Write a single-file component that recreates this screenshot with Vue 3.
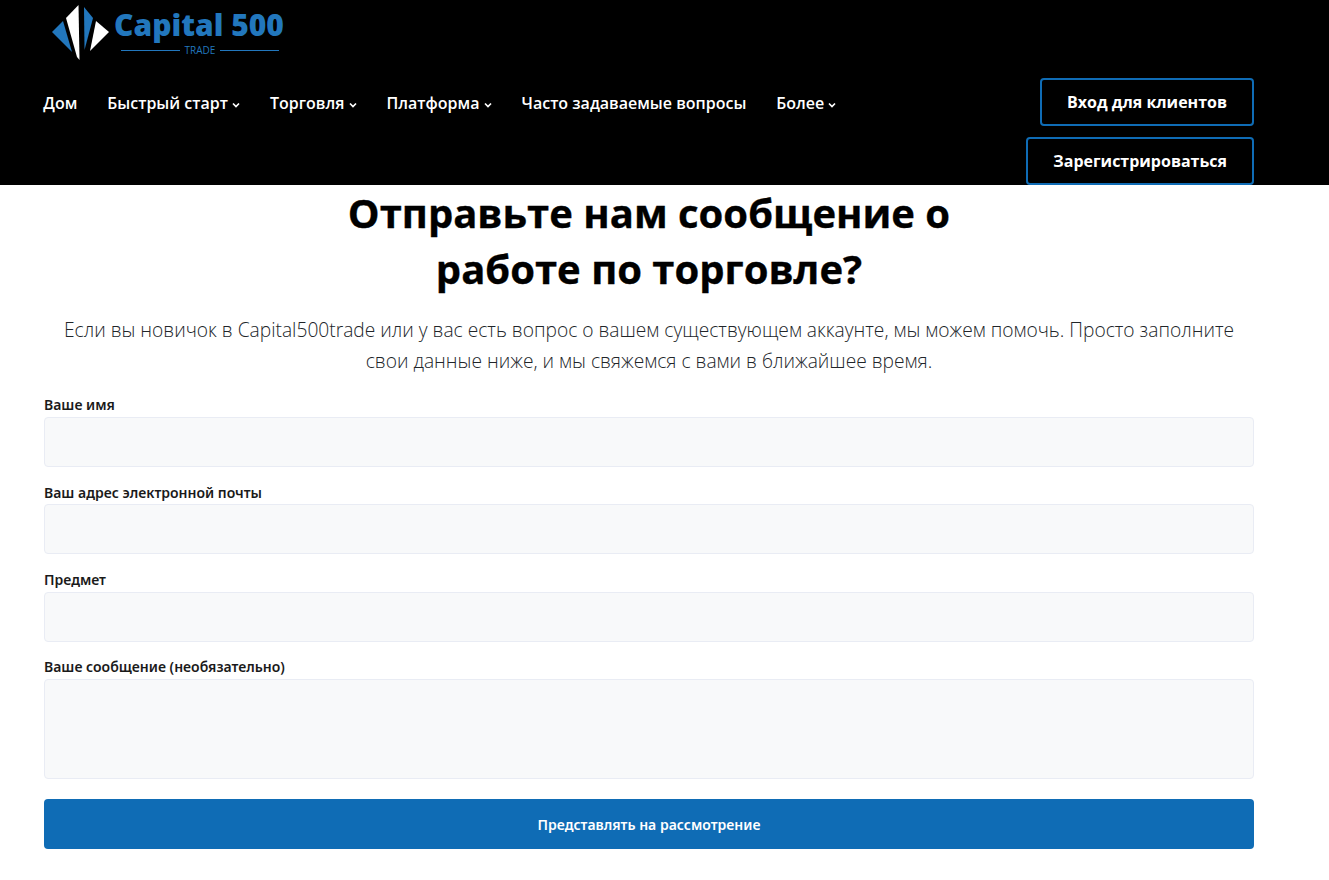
<template>
  <div class="page">
    <header class="header">
      <div class="logo">
        <svg class="mark" width="60" height="62" viewBox="0 0 60 62">
          <polygon points="2,32 13,21 22,52" fill="#2277bd" />
          <polygon points="28.5,5 16,18 27,57 29.5,60" fill="#fff" />
          <polygon points="34,7 43,18 34.5,50" fill="#2277bd" />
          <polygon points="46,21 59,32 40,51" fill="#fff" />
        </svg>
        <div class="wordmark">
          <div class="brand">Capital 500</div>
          <div class="tagline"><span class="rule"></span><span>TRADE</span><span class="rule"></span></div>
        </div>
      </div>
      <div class="navrow">
        <nav class="nav">
          <a v-for="item in nav" :key="item.label" class="navlink">
            {{ item.label }}
            <svg v-if="item.caret" width="8" height="6" viewBox="0 0 8 6" class="caret"><path d="M1 1.5 4 4.5 7 1.5" fill="none" stroke="#fff" stroke-width="1.7" /></svg>
          </a>
        </nav>
        <div class="actions">
          <a class="btn">Вход для клиентов</a>
          <a class="btn">Зарегистрироваться</a>
        </div>
      </div>
    </header>
    <main class="main">
      <h1 class="title">Отправьте нам сообщение о<br />работе по торговле?</h1>
      <p class="lead">Если вы новичок в Capital500trade или у вас есть вопрос о вашем существующем аккаунте, мы можем помочь. Просто заполните свои данные ниже, и мы свяжемся с вами в ближайшее время.</p>
      <form class="form" @submit.prevent>
        <div v-for="f in fields" :key="f" class="field">
          <label class="label">{{ f }}</label>
          <input class="input" type="text" />
        </div>
        <div class="field">
          <label class="label">Ваше сообщение (необязательно)</label>
          <textarea class="input area"></textarea>
        </div>
        <button class="submit" type="submit">Представлять на рассмотрение</button>
      </form>
    </main>
  </div>
</template>

<script setup>
const nav = [
  { label: 'Дом' },
  { label: 'Быстрый старт', caret: true },
  { label: 'Торговля', caret: true },
  { label: 'Платформа', caret: true },
  { label: 'Часто задаваемые вопросы' },
  { label: 'Более', caret: true }
]
const fields = ['Ваше имя', 'Ваш адрес электронной почты', 'Предмет']
</script>

<style>
body { margin: 0; background: #fff; }
</style>

<style scoped>
.page { font-family: "Open Sans", sans-serif; color: #000; height: 880px; overflow: hidden; }
.header { background: #000; height: 185px; padding: 0 75px 0 44px; box-sizing: border-box; }
.logo { display: flex; height: 62px; padding-left: 6px; align-items: flex-start; }
.wordmark { margin-left: 4px; width: 172px; }
.brand { font-family: "Open Sans", sans-serif; font-weight: 800; font-size: 30px; line-height: 38px; color: #2277bd; margin-top: 6px; white-space: nowrap; }
.tagline { display: flex; align-items: center; gap: 5px; width: 158px; font-size: 10px; line-height: 10px; color: #2277bd; margin: 1px 0 0 7px; }
.rule { flex: 1; height: 1px; background: #2277bd; }
.navrow { display: flex; justify-content: space-between; align-items: flex-start; padding-top: 16px; }
.nav { display: flex; gap: 30px; padding-top: 14px; margin-left: -0.7px; }
.navlink { font-weight: 600; font-size: 16px; line-height: 22px; color: #fff; white-space: nowrap; }
.caret { margin-left: 0; vertical-align: 1px; }
.actions { display: flex; flex-direction: column; align-items: flex-end; gap: 11px; }
.btn { display: block; border: 2px solid #0f6cb5; border-radius: 4px; height: 48px; box-sizing: border-box; padding: 0 25px; line-height: 44px; font-weight: 700; font-size: 16px; color: #fff; white-space: nowrap; }
.main { padding: 0 75px 0 44px; }
.title { margin: 0; text-align: center; font-weight: 700; font-size: 40px; line-height: 56px; -webkit-text-stroke: 0.35px #000; }
.lead { margin: 17px 0 0; text-align: center; font-weight: 300; font-size: 19.2px; line-height: 31px; color: #212529; }
.form { margin-top: 19px; }
.field { margin-bottom: 15.33px; }
.label { display: block; padding-top: 0.2px; font-family: "Noto Sans", sans-serif; font-weight: 600; font-size: 14px; line-height: 20px; color: #1a1a1a; margin-bottom: 1.8px; }
.input { display: block; width: 100%; height: 50px; box-sizing: border-box; background: #f8f9fa; border: 1px solid #e9ecf4; border-radius: 4px; padding: 0; outline: none; }
.area { height: 100px; resize: none; }
.submit { display: block; width: 100%; height: 50px; margin-top: 20px; padding: 2px 0 0; border: 0; border-radius: 4px; background: #0f6cb5; color: #fff; font-family: "Noto Sans", sans-serif; font-weight: 600; font-size: 14px; }
</style>
